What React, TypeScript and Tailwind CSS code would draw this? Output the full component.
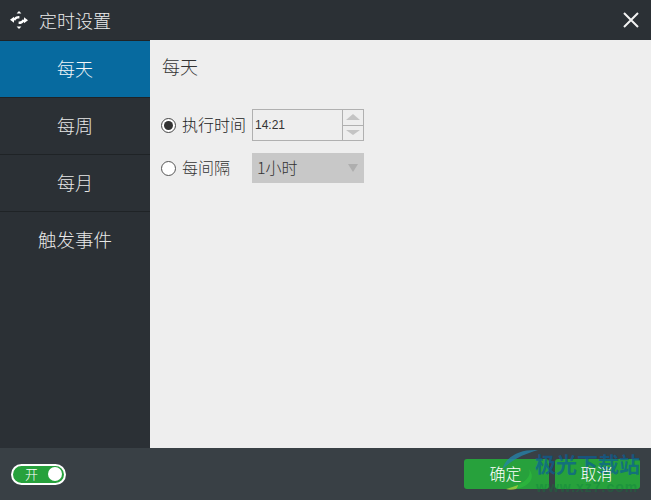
import React from "react";

const font = { fontFamily: '"Noto Sans CJK SC", "Liberation Sans", sans-serif' };

function SideItem({ label, active }: { label: string; active?: boolean }) {
  return (
    <div
      className={`h-[57px] pb-[2px] flex items-center justify-center text-[18px] font-light border-b border-[#1f2326] ${
        active ? "bg-[#076a9f] text-[#f2f6f8]" : "text-[#e8e8e8]"
      }`}
    >
      {label}
    </div>
  );
}

export default function App() {
  return (
    <div className="relative w-[651px] h-[500px] overflow-hidden flex flex-col bg-[#2b3035]" style={font}>
      {/* 标题栏 */}
      <header className="h-[40px] shrink-0 flex items-center justify-between pl-[9px] pr-[11px] bg-[#2b3035]">
        <div className="flex items-center gap-[10px]">
          <svg width="20" height="20" viewBox="0 0 20 20" fill="#ffffff">
            <path d="M10 1l2.4 2.4H7.6z" />
            <path d="M10 19l-2.4-2.4h4.8z" />
            <path d="M1 9.8L5 6.8v1.5C6.4 6.6 8.2 5.8 10.4 6v2.6C8.6 8.4 7.2 9 6.4 10.4L5 10.2v2.6z" />
            <path d="M19 10.2L15 13.2v-1.5c-1.4 1.7-3.2 2.5-5.4 2.3v-2.6c1.8.2 3.2-.4 4-1.8l1.4.2V7.2z" />
          </svg>
          <span className="text-[18px] font-light text-[#ececec] -translate-y-[0.5px]">定时设置</span>
        </div>
        <svg width="18" height="18" viewBox="0 0 18 18" stroke="#f2f2f2" strokeWidth="2">
          <path d="M2 2l14 14M16 2L2 16" />
        </svg>
      </header>

      <div className="flex-1 flex min-h-0">
        {/* 左侧菜单 */}
        <aside className="w-[150px] shrink-0 bg-[#2b3035] border-t border-[#1f2326]">
          <SideItem label="每天" active />
          <SideItem label="每周" />
          <SideItem label="每月" />
          <div className="h-[57px] pb-[2px] flex items-center justify-center text-[18.5px] font-light text-[#e8e8e8]">触发事件</div>
        </aside>

        {/* 内容 */}
        <main className="flex-1 bg-[#eeeeee] pl-[12px] pt-[13px] text-[#333333] font-light">
          <div className="text-[18px] leading-[26px]">每天</div>
          <div className="mt-[30px] -ml-[1px] flex items-center h-[32px]">
            <span className="w-[15px] h-[15px] rounded-full border border-[#444] flex items-center justify-center bg-white">
              <span className="w-[9px] h-[9px] rounded-full bg-[#333]" />
            </span>
            <span className="ml-[6px] w-[70px] pb-[2px] text-[16px] text-[#222]">执行时间</span>
            <div className="flex w-[112px] h-[32px] border border-[#b0b0b0]">
              <div className="flex-1 flex items-center pl-[2px] text-[12px] text-[#333]" style={{ fontFamily: '"Liberation Sans", sans-serif' }}>
                14:21
              </div>
              <div className="w-[21px] border-l border-[#b0b0b0] flex flex-col">
                <div className="flex-1 flex items-center justify-center border-b border-[#b0b0b0]">
                  <span className="w-0 h-0 border-x-[7px] border-x-transparent border-b-[6px] border-b-[#c4c4c4]" />
                </div>
                <div className="flex-1 flex items-center justify-center">
                  <span className="w-0 h-0 border-x-[7px] border-x-transparent border-t-[5px] border-t-[#c4c4c4]" />
                </div>
              </div>
            </div>
          </div>
          <div className="mt-[12px] -ml-[1px] flex items-center h-[30px]">
            <span className="w-[15px] h-[15px] rounded-full border border-[#555] bg-white" />
            <span className="ml-[6px] w-[70px] pb-[2px] text-[16px] text-[#333]">每间隔</span>
            <div className="w-[112px] h-[30px] bg-[#c8c8c8] flex items-center justify-between pl-[5px] pr-[6px] text-[16px] text-[#333]">
              <span className="pb-[2px]">1小时</span>
              <span className="w-0 h-0 border-x-[5px] border-x-transparent border-t-[8px] border-t-[#aeaeae]" />
            </div>
          </div>
        </main>
      </div>

      {/* 底部 */}
      <footer className="h-[52px] shrink-0 bg-[#394045] flex items-center justify-between pl-[11px] pr-[11px]">
        <div className="w-[55px] h-[21px] rounded-full border-2 border-white bg-[#27a13c] flex items-center justify-between pl-[12px] pr-[2px] text-[13px] font-light text-white">
          <span>开</span>
          <span className="w-[14px] h-[14px] rounded-full bg-white" />
        </div>
        <div className="flex gap-[6px]">
          <button className="w-[85px] h-[30px] pb-[3px] pr-[2px] rounded-[3px] bg-[#27a13c] text-[16px] font-light text-white">
            <span className="relative z-10">确定</span>
          </button>
          <button className="w-[85px] h-[30px] pb-[3px] pr-[2px] rounded-[3px] bg-[#27a13c] text-[16px] font-light text-white">
            <span className="relative z-10">取消</span>
          </button>
        </div>
      </footer>

      {/* 水印 */}
      <div className="absolute z-[5] left-[500px] top-[448px] w-[151px] h-[52px] pointer-events-none">
        <svg className="absolute left-0 top-0" width="50" height="52" viewBox="0 0 50 52" fill="none">
          <path d="M38 2C20 1 6 8 2 22C11 12 24 6 38 2z" fill="#2684ad" opacity="0.75" />
          <path d="M29 21C32 29 24 37 6 41C24 43 38 33 29 21z" fill="#2fc23c" opacity="0.55" />
          <path d="M18 37C13 39 9 40 6 41C9 42 13 42 16 41C17 40 18 38 18 37z" fill="#b4cf3e" opacity="0.7" />
        </svg>
        <div className="absolute left-[35px] top-[1px] text-[21px] leading-[28px] font-bold text-[#0b5f96] opacity-70 whitespace-nowrap">
          极光下载站
        </div>
        <div className="absolute left-[36px] top-[31px] text-[14px] leading-[16px] font-bold text-[#0c7d3c] opacity-35 whitespace-nowrap tracking-[1px]" style={{ fontFamily: '"Liberation Sans", sans-serif' }}>
          www.xz7.com
        </div>
      </div>
    </div>
  );
}
